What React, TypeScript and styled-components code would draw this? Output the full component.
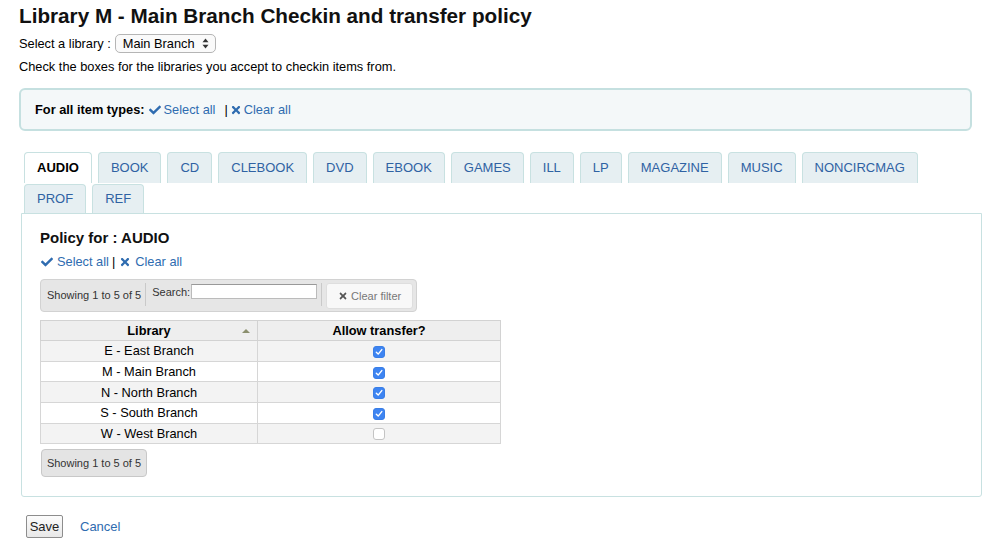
import React from "react";
import styled, { createGlobalStyle } from "styled-components";
import { FaCheck, FaTimes } from "react-icons/fa";

const Global = createGlobalStyle`
  html, body { margin: 0; padding: 0; background: #fff; }
  body { font-family: "Liberation Sans", Arial, sans-serif; font-size: 12.8px; color: #000; }
  * { box-sizing: border-box; }
`;

const Page = styled.div`
  padding: 4px 0 0 19px;
  width: 1000px;
`;

const Title = styled.h1`
  margin: 0;
  font-size: 20.7px;
  line-height: 24px;
  font-weight: bold;
  color: #111;
`;

const SelectRow = styled.div`
  display: flex;
  align-items: center;
  gap: 4px;
  margin-top: 6px;
  height: 19px;
`;

const SelectBox = styled.div`
  display: inline-flex;
  align-items: center;
  height: 19px;
  width: 101px;
  padding: 0 6px 0 7px;
  border: 1px solid #b5b5b5;
  border-radius: 5px;
  background: #fafafa;
  justify-content: space-between;
  font-size: 12.8px;
`;

const Hint = styled.p`
  margin: 6px 0 0;
  line-height: 15px;
`;

const AllPanel = styled.div`
  margin-top: 14px;
  width: 953px;
  height: 43px;
  display: flex;
  align-items: center;
  padding: 0 14px;
  background: #f4f8f9;
  border: 2px solid #c5e0e0;
  border-radius: 6px;
`;

const Bold = styled.b`
  font-weight: bold;
  margin-right: 4px;
`;

const Link = styled.a<{ $gap?: number }>`
  color: #2f6cb0;
  text-decoration: none;
  display: inline-flex;
  align-items: center;
  gap: ${(p) => p.$gap ?? 3}px;
  cursor: pointer;
  svg { width: 12px; height: 12px; }
`;

const Sep = styled.span<{ $l: number; $r: number }>`
  color: #000;
  margin: 0 ${(p) => p.$r}px 0 ${(p) => p.$l}px;
`;

const Tabs = styled.div`
  display: flex;
  flex-wrap: wrap;
  column-gap: 6px;
  row-gap: 1px;
  margin: 21px 0 0 5px;
  width: 960px;
`;

const Tab = styled.div<{ $active?: boolean; $h: number }>`
  height: ${(p) => p.$h}px;
  padding: 0 12px 2px;
  display: flex;
  align-items: center;
  font-size: 13px;
  border: 1px solid #c8e1e1;
  border-bottom: none;
  border-radius: 4px 4px 0 0;
  background: ${(p) => (p.$active ? "#fff" : "#e6eff2")};
  color: ${(p) => (p.$active ? "#000" : "#2f62a3")};
  font-weight: ${(p) => (p.$active ? "bold" : "normal")};
`;

const TabPanel = styled.div`
  margin-left: 2px;
  width: 961px;
  height: 284px;
  border: 1px solid #c8e1e1;
  border-radius: 0 0 3px 3px;
  padding: 15px 18px 0;
`;

const PolicyTitle = styled.h3`
  margin: 0;
  font-size: 15px;
  line-height: 18px;
  font-weight: bold;
  color: #111;
`;

const LinkRow = styled.div`
  margin-top: 8px;
  padding-left: 1px;
  display: flex;
  align-items: center;
  line-height: 14px;
`;

const InfoBar = styled.div`
  margin-top: 10px;
  width: 377px;
  height: 33px;
  display: flex;
  align-items: stretch;
  background: #e6e6e6;
  border: 1px solid #d2d2d2;
  border-radius: 4px;
  font-size: 11px;
  color: #333;
`;

const InfoCell = styled.div<{ $sep?: boolean; $align?: string }>`
  display: flex;
  align-items: ${(p) => p.$align ?? "center"};
  padding: 0 4px 0 6px;
  border-right: ${(p) => (p.$sep ? "1px solid #c9c9c9" : "none")};
  margin: 3px 0 5px;
`;

const SearchLabel = styled.span`
  margin-top: 3px;
`;

const SearchInput = styled.input`
  width: 126px;
  height: 15px;
  margin: 1px 0 0 1px;
  border: 1px solid #bbb;
  border-top-color: #999;
  background: #fff;
  padding: 0;
`;

const ClearBtn = styled.div`
  margin: 3px 0 2px 4px;
  width: 87px;
  display: flex;
  align-items: center;
  justify-content: center;
  gap: 3px;
  background: #f8f8f8;
  border: 1px solid #dedede;
  border-radius: 3px;
  color: #777;
  font-size: 11px;
  svg { width: 10px; height: 10px; color: #555; }
`;

const Table = styled.table`
  margin-top: 8px;
  border-collapse: collapse;
  width: 461px;
  font-size: 12.8px;
  border: 1px solid #cfcfcf;
`;

const Th = styled.th<{ $w?: number }>`
  height: 20px;
  padding: 0;
  background: #eeeeee;
  border: 1px solid #d2d2d2;
  font-weight: bold;
  text-align: center;
  position: relative;
  width: ${(p) => (p.$w ? `${p.$w}px` : "auto")};
`;

const SortArrow = styled.span`
  position: absolute;
  right: 7px;
  top: 8px;
  width: 0;
  height: 0;
  border-left: 4px solid transparent;
  border-right: 4px solid transparent;
  border-bottom: 4px solid #8b8f6e;
`;

const Tr = styled.tr<{ $odd: boolean }>`
  background: ${(p) => (p.$odd ? "#f3f3f3" : "#fff")};
`;

const Td = styled.td`
  height: 20.7px;
  padding: 0;
  border: 1px solid #d6d6d6;
  text-align: center;
  vertical-align: middle;
`;

const Box = styled.span<{ $checked: boolean }>`
  display: inline-flex;
  align-items: center;
  justify-content: center;
  width: 12px;
  height: 12px;
  margin-top: 3px;
  border-radius: 3px;
  background: ${(p) => (p.$checked ? "#3d84f2" : "#fff")};
  border: 1px solid ${(p) => (p.$checked ? "#3a7ee6" : "#c4c4c4")};
`;

const BottomInfo = styled.div`
  margin-top: 5px;
  margin-left: 1px;
  width: 106px;
  height: 28px;
  display: flex;
  align-items: center;
  justify-content: center;
  background: #e4e4e4;
  border: 1px solid #c8c8c8;
  border-radius: 4px;
  font-size: 11px;
  color: #333;
`;

const Actions = styled.div`
  margin: 18px 0 0 7px;
  display: flex;
  align-items: center;
  gap: 17px;
`;

const SaveBtn = styled.button`
  height: 23px;
  width: 37px;
  padding: 0;
  font-family: "Liberation Sans", Arial, sans-serif;
  font-size: 13px;
  color: #222;
  background: linear-gradient(#fcfcfc, #e8e8e8);
  border: 1px solid #8d8d8d;
  border-radius: 2px;
`;

const CancelLink = styled(Link)`
  font-size: 13px;
`;

const tabsRow = [
  "AUDIO", "BOOK", "CD", "CLEBOOK", "DVD", "EBOOK", "GAMES", "ILL", "LP",
  "MAGAZINE", "MUSIC", "NONCIRCMAG", "PROF", "REF",
];

const rows = [
  { name: "E - East Branch", checked: true },
  { name: "M - Main Branch", checked: true },
  { name: "N - North Branch", checked: true },
  { name: "S - South Branch", checked: true },
  { name: "W - West Branch", checked: false },
];

const Arrows = () => (
  <svg width="7" height="11" viewBox="0 0 7 11">
    <path d="M3.5 0.5 L6.5 4.2 L0.5 4.2 Z" fill="#333" />
    <path d="M3.5 10.5 L6.5 6.8 L0.5 6.8 Z" fill="#333" />
  </svg>
);

const Tick = () => (
  <svg width="8" height="8" viewBox="0 0 8 8">
    <path d="M1.3 4.3 L3.2 6.1 L6.8 1.6" stroke="#fff" strokeWidth="1.4" fill="none" strokeLinecap="round" strokeLinejoin="round" />
  </svg>
);

export default function App() {
  return (
    <>
      <Global />
      <Page>
        <Title>Library M - Main Branch Checkin and transfer policy</Title>
        <SelectRow>
          <span>Select a library :</span>
          <SelectBox>
            <span>Main Branch</span>
            <Arrows />
          </SelectBox>
        </SelectRow>
        <Hint>Check the boxes for the libraries you accept to checkin items from.</Hint>
        <AllPanel>
          <Bold>For all item types:</Bold>
          <Link><FaCheck />Select all</Link>
          <Sep $l={9} $r={2}>|</Sep>
          <Link $gap={2}><FaTimes />Clear all</Link>
        </AllPanel>
        <Tabs>
          {tabsRow.map((t, i) => (
            <Tab key={t} $active={i === 0} $h={i < 12 ? 31 : 29}>{t}</Tab>
          ))}
        </Tabs>
        <TabPanel>
          <PolicyTitle>Policy for : AUDIO</PolicyTitle>
          <LinkRow>
            <Link $gap={4}><FaCheck />Select all</Link>
            <Sep $l={3} $r={4}>|</Sep>
            <Link $gap={4}><FaTimes />Clear all</Link>
          </LinkRow>
          <InfoBar>
            <InfoCell $sep>Showing 1 to 5 of 5</InfoCell>
            <InfoCell $sep $align="flex-start">
              <SearchLabel>Search:</SearchLabel>
              <SearchInput />
            </InfoCell>
            <ClearBtn><FaTimes />Clear filter</ClearBtn>
          </InfoBar>
          <Table>
            <thead>
              <tr>
                <Th $w={217}>Library<SortArrow /></Th>
                <Th>Allow transfer?</Th>
              </tr>
            </thead>
            <tbody>
              {rows.map((r, i) => (
                <Tr key={r.name} $odd={i % 2 === 0}>
                  <Td>{r.name}</Td>
                  <Td>
                    <Box $checked={r.checked}>{r.checked && <Tick />}</Box>
                  </Td>
                </Tr>
              ))}
            </tbody>
          </Table>
          <BottomInfo>Showing 1 to 5 of 5</BottomInfo>
        </TabPanel>
        <Actions>
          <SaveBtn>Save</SaveBtn>
          <CancelLink>Cancel</CancelLink>
        </Actions>
      </Page>
    </>
  );
}
